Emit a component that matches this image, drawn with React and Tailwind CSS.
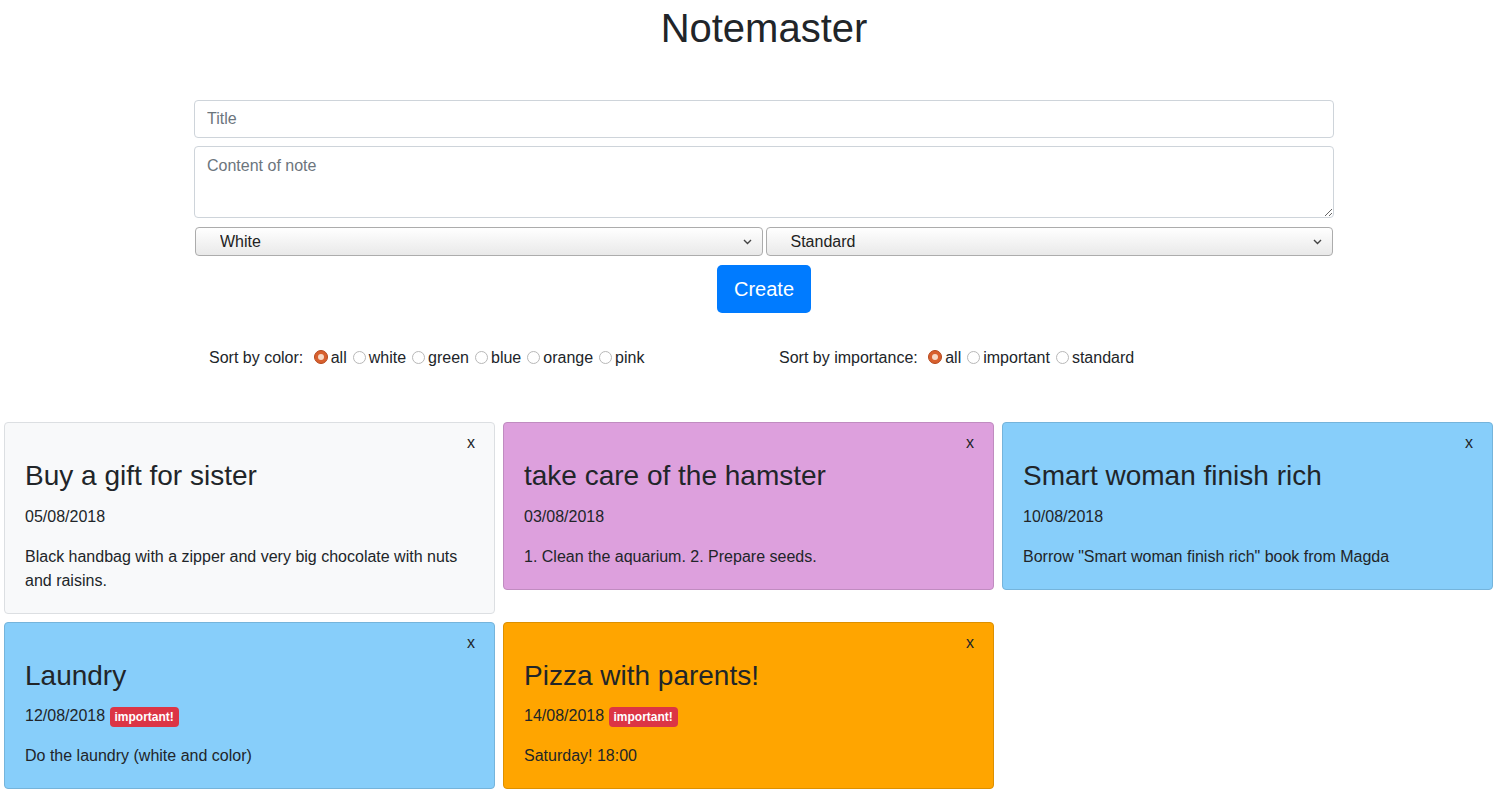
import { useState } from "react";

const notes = [
  {
    id: 1,
    title: "Buy a gift for sister",
    date: "05/08/2018",
    content: "Black handbag with a zipper and very big chocolate with nuts and raisins.",
    color: "white",
    important: false,
  },
  {
    id: 2,
    title: "take care of the hamster",
    date: "03/08/2018",
    content: "1. Clean the aquarium. 2. Prepare seeds.",
    color: "pink",
    important: false,
  },
  {
    id: 3,
    title: "Smart woman finish rich",
    date: "10/08/2018",
    content: 'Borrow "Smart woman finish rich" book from Magda',
    color: "blue",
    important: false,
  },
  {
    id: 4,
    title: "Laundry",
    date: "12/08/2018",
    content: "Do the laundry (white and color)",
    color: "blue",
    important: true,
  },
  {
    id: 5,
    title: "Pizza with parents!",
    date: "14/08/2018",
    content: "Saturday! 18:00",
    color: "orange",
    important: true,
  },
];

const colorClasses = {
  white: "bg-[#f8f9fa] border-[#dcdfe2]",
  pink: "bg-[#dda0dd] border-[#c08cc0]",
  blue: "bg-[#87cefa] border-[#75b4db]",
  orange: "bg-[#ffa500] border-[#dd9000]",
};

const Radio = ({ checked, onClick }) => (
  <span
    onClick={onClick}
    className={`inline-block align-[-1px] ml-[6px] mr-[3px] rounded-full cursor-pointer ${
      checked
        ? "w-[14px] h-[14px] bg-[#d8602e] border border-[#b5481c] relative"
        : "w-[13px] h-[13px] bg-white border border-[#b8b8b8]"
    }`}
  >
    {checked && (
      <span className="absolute left-[3px] top-[3px] w-[6px] h-[6px] rounded-full bg-[#f7d9c6]" />
    )}
  </span>
);

const RadioGroup = ({ label, options, value, onChange }) => (
  <div className="w-1/2 px-[15px] whitespace-nowrap">
    {label}{" "}
    {options.map((o) => (
      <span key={o}>
        <Radio checked={value === o} onClick={() => onChange(o)} />
        {o}
      </span>
    ))}
  </div>
);

const Chevron = () => (
  <svg
    className="absolute right-[11px] top-1/2 -translate-y-1/2 pointer-events-none"
    width="9"
    height="6"
    viewBox="0 0 9 6"
    fill="none"
    stroke="#444"
    strokeWidth="1.4"
  >
    <path d="M1 1l3.5 3.5L8 1" />
  </svg>
);

const NoteCard = ({ note }) => (
  <div
    className={`relative rounded border px-5 pt-[36px] pb-5 text-[#212529] ${colorClasses[note.color]}`}
  >
    <button className="absolute top-[8px] right-[19px] text-base leading-6 text-[#212529]">
      x
    </button>
    <h3 className="text-[28px] leading-[1.2] mb-3">{note.title}</h3>
    <p className="mb-4 leading-6">
      {note.date}{" "}
      {note.important && (
        <span className="inline-block rounded bg-[#dc3545] px-[5px] py-[4px] text-xs font-bold leading-none text-white">
          important!
        </span>
      )}
    </p>
    <p className="leading-6">{note.content}</p>
  </div>
);

export default function App() {
  const [colorFilter, setColorFilter] = useState("all");
  const [importanceFilter, setImportanceFilter] = useState("all");

  return (
    <div className="min-h-screen bg-white text-base text-[#212529] font-['Liberation_Sans',Arial,sans-serif]">
      <div className="w-[1140px] ml-[194px]">
        {/* Header */}
        <h1 className="mt-1 text-center text-[40px] leading-[1.2]">Notemaster</h1>

        {/* Form */}
        <input
          type="text"
          placeholder="Title"
          className="mt-12 block w-full h-[38px] rounded border border-[#ced4da] px-3 leading-6 placeholder:text-[#6c757d]"
        />
        <textarea
          placeholder="Content of note"
          className="mt-2 block w-full h-[72px] rounded border border-[#ced4da] px-3 py-[7px] leading-6 placeholder:text-[#6c757d]"
        />
        <div className="mt-[9px] flex gap-[3px] px-px">
          <div className="relative flex-1">
            <select className="appearance-none w-full h-[29px] rounded border border-[#acacac] bg-gradient-to-b from-white to-[#e9e9e9] pl-[24px] text-base text-[#222]">
              <option>White</option>
              <option>Green</option>
              <option>Blue</option>
              <option>Orange</option>
              <option>Pink</option>
            </select>
            <Chevron />
          </div>
          <div className="relative flex-1">
            <select className="appearance-none w-full h-[29px] rounded border border-[#acacac] bg-gradient-to-b from-white to-[#e9e9e9] pl-[24px] text-base text-[#222]">
              <option>Standard</option>
              <option>Important</option>
            </select>
            <Chevron />
          </div>
        </div>
        <div className="mt-[9px] flex justify-center">
          <button className="h-12 rounded-[5px] bg-[#007bff] px-[17px] text-xl leading-[30px] text-white">
            Create
          </button>
        </div>

        {/* Filters */}
        <div className="mt-[33px] flex leading-6">
          <RadioGroup
            label="Sort by color:"
            options={["all", "white", "green", "blue", "orange", "pink"]}
            value={colorFilter}
            onChange={setColorFilter}
          />
          <RadioGroup
            label="Sort by importance:"
            options={["all", "important", "standard"]}
            value={importanceFilter}
            onChange={setImportanceFilter}
          />
        </div>
      </div>

      {/* Notes */}
      <div className="mt-[52px] grid grid-cols-3 items-start gap-y-2">
        {notes.map((n) => (
          <div key={n.id} className="px-1">
            <NoteCard note={n} />
          </div>
        ))}
      </div>
    </div>
  );
}
